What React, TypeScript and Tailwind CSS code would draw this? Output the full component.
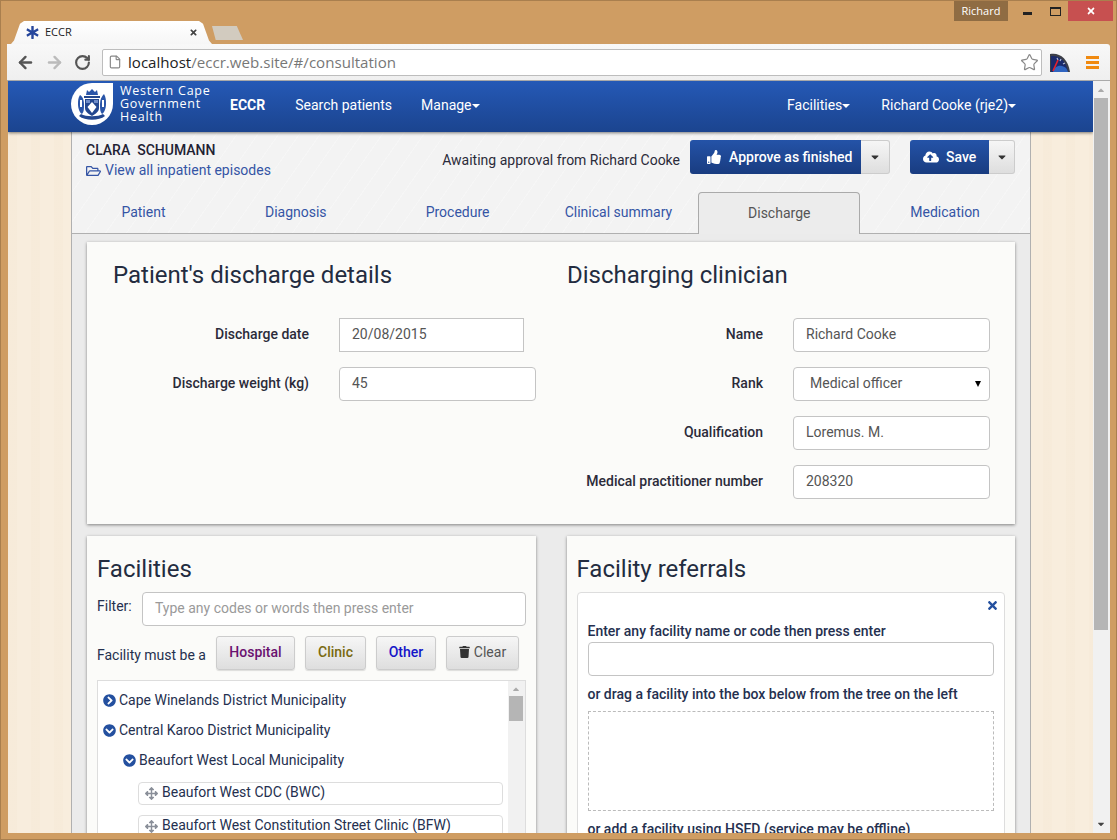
import { ArrowLeft, ArrowRight, File, RotateCw, Star } from "lucide-react"
import {
  FaArrowsAlt,
  FaCaretDown,
  FaCaretUp,
  FaChevronCircleDown,
  FaChevronCircleRight,
  FaCloudUploadAlt,
  FaRegFolderOpen,
  FaStarOfLife,
  FaThumbsUp,
  FaTimes,
  FaTrash,
} from "react-icons/fa"

const tabs = [
  { label: "Patient", w: "w-[143px]" },
  { label: "Diagnosis", w: "w-[162px]" },
  { label: "Procedure", w: "w-[162px]" },
  { label: "Clinical summary", w: "w-[160px]" },
  { label: "Discharge", w: "w-[162px]", active: true },
  { label: "Medication", w: "w-[170px]" },
]

function Caret() {
  return <span className="inline-block h-0 w-0 border-x-[4px] border-t-[4px] border-x-transparent border-t-white align-middle" />
}

function Crest() {
  return (
    <svg width="42" height="42" viewBox="0 0 42 42" className="mb-[4px] shrink-0">
      <path d="M21 0H42V21A21 21 0 1 1 21 0Z" fill="#fff" />
      {/* crown and helm */}
      <path d="M16 7l2 2 3-3 3 3 2-2 1 5H15Z" fill="#2a55a8" />
      <path d="M13 13h16v2H13Z" fill="#23478f" />
      {/* shield */}
      <path d="M14 16h14v9c0 4-4 6-7 8-3-2-7-4-7-8Z" fill="#23478f" />
      <path d="M21 19l4.500 5-4.500 6-4.500-6Z" fill="#fff" />
      <path d="M15 17h4v3h-4ZM23 17h4v3h-4Z" fill="#6f8cc8" />
      {/* supporters */}
      <path d="M9 12c2 1 4 4 4 9s0 8-2 10c-2-1-4-5-4-10 0-3 0-6 2-9ZM33 11c-2 2-4 5-4 10s0 8 2 10c2-1 4-5 4-10 0-3 0-7-2-10Z" fill="#2a55a8" />
      <path d="M9 17h2v7H9ZM31 17h2v7h-2Z" fill="#fff" />
      {/* motto ribbon */}
      <path d="M8 33c6 5 20 5 26 0l-2-2c-5 3-17 3-22 0Z" fill="#23478f" />
    </svg>
  )
}

function Gauge() {
  return (
    <svg className="ml-[8px] shrink-0" width="20" height="20" viewBox="0 0 20 20">
      <path d="M0 20V2C9 0 18 6 20 20Z" fill="#3c3f48" />
      <path d="M1 20V4C9 3 16 8 18 20Z" fill="#1a2a6c" />
      <path d="M3 20C4 15 8 13 12 14s5 3 6 6Z" fill="#2f64c0" />
      <path d="M7 6l1 2M11 7l-1 2M15 11l-2 1" stroke="#b8c0d8" strokeWidth="1.2" />
      <path d="M3 19 8 8" stroke="#e8202c" strokeWidth="1.6" />
    </svg>
  )
}

function Field({ label, children }: { label: string; children: React.ReactNode }) {
  return (
    <div className="mb-[15px] flex items-center">
      <label className="w-[252px] shrink-0 pr-[30px] pb-[2px] text-right font-medium text-[#2b2b3a]">{label}</label>
      {children}
    </div>
  )
}

function TextBox({ value, className }: { value: string; className: string }) {
  return (
    <div className={`flex h-[34px] items-center border border-[#c4c4c4] bg-white px-3 pb-[2px] text-[#555] ${className}`}>
      {value}
    </div>
  )
}

function FilterButton({ label, w, color, children }: { label: string; w: string; color: string; children?: React.ReactNode }) {
  return (
    <div className={`flex h-[34px] ${w} items-center justify-center gap-1 rounded-[3px] border border-[#ccc] bg-gradient-to-b from-[#f6f6f6] to-[#dedede] pb-[2px] font-medium shadow-[0_1px_1px_rgba(0,0,0,0.12)] ${color}`}>
      {children}
      {label}
    </div>
  )
}

function TreeNode({ label, open, indent }: { label: string; open?: boolean; indent: string }) {
  return (
    <div className={`flex h-[30px] items-center gap-[3px] pb-[2px] ${indent} text-[#25304f]`}>
      {open ? <FaChevronCircleDown className="h-[13px] w-[13px] text-[#24509f]" /> : <FaChevronCircleRight className="h-[13px] w-[13px] text-[#24509f]" />}
      {label}
    </div>
  )
}

function DragItem({ label }: { label: string }) {
  return (
    <div className="mb-[10px] ml-[35px] flex h-[23px] w-[365px] shrink-0 items-center gap-[4px] rounded-[4px] border border-[#ddd] bg-white pb-[2px] pl-[6px] text-[#25304f]">
      <FaArrowsAlt className="mt-[2px] h-[13px] w-[13px] text-[#8a8f99]" />
      {label}
    </div>
  )
}

export default function App() {
  return (
    <div className="flex h-[840px] w-[1117px] flex-col overflow-hidden border border-[#a97f4e] bg-[#cf9d63] font-['Roboto',sans-serif] text-[14px] text-[#25304f]">
      {/* window title bar */}
      <div className="flex h-[43px] shrink-0 items-start justify-between">
        <div className="mt-[20px] ml-[10px] flex items-start">
          <div className="flex h-[23px] w-[201px] items-center bg-gradient-to-b from-white to-[#f6f6f6] pr-[14px] pl-[15px] font-['Open_Sans',sans-serif] text-[11px] text-[#222] [clip-path:polygon(0_100%,3px_85%,9px_12%,13px_0,calc(100%-13px)_0,calc(100%-9px)_12%,calc(100%-3px)_85%,100%_100%)]">
            <FaStarOfLife className="h-[13px] w-[13px] text-[#27479c]" />
            <span className="ml-[6px] flex-1">ECCR</span>
            <FaTimes className="h-[9px] w-[9px] text-[#444]" />
          </div>
          <div className="mt-[5px] h-[14px] w-[31px] bg-[#d2cbbf] [clip-path:polygon(0_0,80%_0,100%_100%,12%_100%)]" />
        </div>
        <div className="mr-[3px] flex items-start">
          <div className="flex h-[20px] w-[54px] items-center justify-center bg-[#8f6c43] font-['Open_Sans',sans-serif] text-[11px] text-white">Richard</div>
          <div className="flex h-[20px] w-[38px] items-center justify-center">
            <span className="mt-[5px] h-[3px] w-[9px] bg-[#222]" />
          </div>
          <div className="flex h-[20px] w-[18px] items-center justify-center">
            <span className="h-[9px] w-[11px] border border-t-2 border-[#222]" />
          </div>
          <div className="ml-[4px] flex h-[20px] w-[45px] items-center justify-center bg-[#c75050]">
            <FaTimes className="h-[10px] w-[10px] text-white" />
          </div>
        </div>
      </div>

      {/* chrome toolbar */}
      <div className="mx-[6px] flex h-[37px] shrink-0 items-center rounded-tr-[3px] border-b border-[#a9a9a9] bg-gradient-to-b from-[#f8f8f8] to-[#efefef] pl-[9px]">
        <ArrowLeft className="h-[19px] w-[19px] text-[#555]" strokeWidth={3} />
        <ArrowRight className="ml-[10px] h-[19px] w-[19px] text-[#bbb]" strokeWidth={3} />
        <RotateCw className="ml-[10px] h-[17px] w-[17px] text-[#555]" strokeWidth={3} />
        <div className="ml-[11px] flex h-[27px] w-[940px] shrink-0 items-center rounded-[2px] border border-[#bdbdbd] bg-white pl-[5px]">
          <File className="h-[14px] w-[14px] text-[#888]" />
          <span className="ml-[6px] font-['Open_Sans',sans-serif] text-[15.1px] text-[#777]">
            <span className="text-[#222]">localhost</span>/eccr.web.site/#/consultation
          </span>
          <Star className="mr-[2px] ml-auto h-[19px] w-[19px] text-[#888]" strokeWidth={1.5} />
        </div>
        <Gauge />
        <div className="ml-[16px] flex h-[13px] w-[13px] flex-col justify-between">
          <span className="h-[3px] bg-[#f08a10]" />
          <span className="h-[3px] bg-[#f08a10]" />
          <span className="h-[3px] bg-[#f08a10]" />
        </div>
      </div>

      {/* browser viewport */}
      <div className="mr-[6px] ml-[7px] flex h-[752px] shrink-0 overflow-hidden">
        <div className="flex w-[1085px] shrink-0 flex-col overflow-hidden bg-[#f8eddd] bg-[repeating-linear-gradient(90deg,rgba(214,180,130,0.035)_0,rgba(214,180,130,0.035)_9px,transparent_9px,transparent_23px)]">
          <nav className="z-10 flex h-[51px] shrink-0 items-center bg-gradient-to-b from-[#2559b6] to-[#1b448f] pr-[77px] pb-[2px] pl-[63px] text-white shadow-[0_1px_3px_rgba(0,0,0,0.5)]">
            <Crest />
            <div className="mb-[4px] ml-[7px] w-[110px] shrink-0 font-['Open_Sans',sans-serif] text-[12.5px] leading-[13px] tracking-[0.75px]">
              <div className="font-medium">Western Cape</div>
              <div className="font-medium">Government</div>
              <div>Health</div>
            </div>
            <span className="font-bold">ECCR</span>
            <span className="ml-[30px]">Search patients</span>
            <span className="ml-[29px]">Manage<Caret /></span>
            <span className="ml-auto">Facilities<Caret /></span>
            <span className="ml-[31px]">Richard Cooke (rje2)<Caret /></span>
          </nav>

          <div className="ml-[63px] flex w-[960px] flex-1 flex-col overflow-hidden border-x border-[#b0b0b0] bg-[#f3f3f3] bg-[repeating-linear-gradient(125deg,rgba(255,255,255,0.25)_0,rgba(255,255,255,0.25)_1px,transparent_1px,transparent_17px)]">
            {/* patient header */}
            <div className="flex h-[60px] shrink-0 pr-[15px] pl-[14px]">
              <div className="pt-[8px]">
                <div className="font-medium whitespace-pre text-[#1f2233]">CLARA  SCHUMANN</div>
                <div className="-mt-px flex items-center gap-[4px] text-[#3555a5]">
                  <FaRegFolderOpen className="h-[14px] w-[15px]" />
                  View all inpatient episodes
                </div>
              </div>
              <div className="mt-[8px] ml-auto flex items-start">
                <span className="mt-[10px] mr-[10px] text-[#2b2b3a]">Awaiting approval from Richard Cooke</span>
                <div className="flex h-[34px] w-[171px] items-center gap-[8px] rounded-l-[3px] bg-gradient-to-b from-[#2453a8] to-[#193c80] pl-[17px] font-medium text-white">
                  <FaThumbsUp className="h-[14px] w-[14px]" />
                  Approve as finished
                </div>
                <div className="flex h-[34px] w-[29px] items-center justify-center rounded-r-[3px] border border-l-0 border-[#ccc] bg-gradient-to-b from-[#f6f6f6] to-[#dedede]">
                  <FaCaretDown className="h-[12px] w-[12px] text-[#333]" />
                </div>
                <div className="ml-[20px] flex h-[34px] w-[79px] items-center gap-[7px] rounded-l-[3px] bg-gradient-to-b from-[#2453a8] to-[#193c80] pl-[13px] font-medium text-white">
                  <FaCloudUploadAlt className="h-[16px] w-[16px]" />
                  Save
                </div>
                <div className="flex h-[34px] w-[26px] items-center justify-center rounded-r-[3px] border border-l-0 border-[#ccc] bg-gradient-to-b from-[#f6f6f6] to-[#dedede]">
                  <FaCaretDown className="h-[12px] w-[12px] text-[#333]" />
                </div>
              </div>
            </div>

            {/* tabs */}
            <div className="flex h-[42px] shrink-0 border-b border-[#b0b0b0]">
              {tabs.map((t) =>
                t.active ? (
                  <div key={t.label} className={`${t.w} z-10 -mb-px flex items-center justify-center rounded-t-[4px] border border-b-0 border-[#aaa] bg-[#ececec] text-[#555]`}>
                    {t.label}
                  </div>
                ) : (
                  <div key={t.label} className={`${t.w} flex items-center justify-center text-[#3555a5]`}>
                    {t.label}
                  </div>
                ),
              )}
            </div>

            <div className="flex flex-1 flex-col bg-[#ebebeb]">
              {/* discharge details */}
              <div className="mx-[15px] mt-[8px] grid h-[282px] shrink-0 grid-cols-[454px_1fr] bg-[#fbfbf9] shadow-[0_1px_3px_rgba(0,0,0,0.45)]">
                <div className="pl-[26px]">
                  <h2 className="mt-[18px] h-[30px] text-[24px] leading-[30px] text-[#232c40]">Patient's discharge details</h2>
                  <div className="mt-[28px] -ml-[26px]">
                    <Field label="Discharge date">
                      <TextBox value="20/08/2015" className="w-[185px]" />
                    </Field>
                    <Field label="Discharge weight (kg)">
                      <TextBox value="45" className="w-[197px] rounded-[4px]" />
                    </Field>
                  </div>
                </div>
                <div className="pl-[26px]">
                  <h2 className="mt-[18px] h-[30px] text-[24px] leading-[30px] text-[#232c40]">Discharging clinician</h2>
                  <div className="mt-[28px] -ml-[26px]">
                    <Field label="Name">
                      <TextBox value="Richard Cooke" className="w-[197px] rounded-[4px]" />
                    </Field>
                    <Field label="Rank">
                      <div className="flex h-[34px] w-[197px] items-center justify-between rounded-[4px] border border-[#c4c4c4] bg-white pr-[8px] pb-[2px] pl-4 text-[#555]">
                        Medical officer
                        <span className="mt-[2px] h-0 w-0 border-x-[3.5px] border-t-[6px] border-x-transparent border-t-black" />
                      </div>
                    </Field>
                    <Field label="Qualification">
                      <TextBox value="Loremus. M." className="w-[197px] rounded-[4px]" />
                    </Field>
                    <Field label="Medical practitioner number">
                      <TextBox value="208320" className="w-[197px] rounded-[4px]" />
                    </Field>
                  </div>
                </div>
              </div>

              {/* bottom panels */}
              <div className="mx-[15px] mt-[12px] flex flex-1 gap-[31px]">
                <div className="w-[449px] bg-[#fbfbf9] px-[10px] shadow-[0_1px_3px_rgba(0,0,0,0.45)]">
                  <h2 className="mt-[18px] h-[30px] text-[24px] leading-[30px] text-[#232c40]">Facilities</h2>
                  <div className="mt-[8px] flex">
                    <span className="mt-[4px] w-[45px]">Filter:</span>
                    <div className="flex h-[34px] flex-1 items-center rounded-[4px] border border-[#c4c4c4] bg-white pb-[2px] pl-3 text-[#9a9a9a]">
                      Type any codes or words then press enter
                    </div>
                  </div>
                  <div className="mt-[10px] flex items-center">
                    <span className="mt-[5px] w-[119px]">Facility must be a</span>
                    <div className="flex gap-[10px]">
                      <FilterButton label="Hospital" w="w-[79px]" color="text-[#6a1270]" />
                      <FilterButton label="Clinic" w="w-[61px]" color="text-[#7a6a10]" />
                      <FilterButton label="Other" w="w-[60px]" color="text-[#1515c8]" />
                      <FilterButton label="Clear" w="w-[73px]" color="font-normal text-[#555]">
                        <FaTrash className="h-[12px] w-[11px] text-[#333]" />
                      </FilterButton>
                    </div>
                  </div>
                  <div className="mt-[10px] flex h-[160px] border border-b-0 border-[#ddd] bg-white">
                    <div className="flex-1 pt-[5px] pl-[5px]">
                      <TreeNode label="Cape Winelands District Municipality" indent="" />
                      <TreeNode label="Central Karoo District Municipality" open indent="" />
                      <TreeNode label="Beaufort West Local Municipality" open indent="pl-[20px]" />
                      <div className="mt-[6px] flex flex-col">
                        <DragItem label="Beaufort West CDC (BWC)" />
                        <DragItem label="Beaufort West Constitution Street Clinic (BFW)" />
                      </div>
                    </div>
                    <div className="flex w-[17px] flex-col items-center bg-[#f1f1f1]">
                      <FaCaretUp className="mt-[3px] h-[10px] w-[10px] text-[#aaa]" />
                      <div className="mt-[2px] h-[25px] w-[14px] bg-[#b5b5b5]" />
                    </div>
                  </div>
                </div>
                <div className="w-[449px] bg-[#fbfbf9] px-[10px] shadow-[0_1px_3px_rgba(0,0,0,0.45)]">
                  <h2 className="mt-[18px] h-[30px] text-[24px] leading-[30px] text-[#232c40]">Facility referrals</h2>
                  <div className="mt-[8px] h-[260px] rounded-t-[4px] border border-[#ddd] bg-white px-[10px]">
                    <div className="-mr-[5px] flex h-[24px] items-center justify-end">
                      <FaTimes className="h-[13px] w-[13px] text-[#24509f]" />
                    </div>
                    <div className="mt-[4px] font-medium">Enter any facility name or code then press enter</div>
                    <div className="h-[34px] w-[406px] rounded-[4px] border border-[#c4c4c4] bg-white" />
                    <div className="mt-[8px] font-medium">or drag a facility into the box below from the tree on the left</div>
                    <div className="mt-[6px] h-[100px] w-[406px] border border-dashed border-[#bbb]" />
                    <div className="mt-[8px] font-medium">or add a facility using HSED (service may be offline)</div>
                  </div>
                </div>
              </div>
            </div>
          </div>
        </div>

        {/* page scrollbar */}
        <div className="flex flex-1 flex-col items-center justify-between bg-[#f1f1f1] pr-[2px] pl-px">
          <div className="flex w-full flex-col items-center">
            <FaCaretUp className="mt-[4px] h-[10px] w-[10px] text-[#aaa]" />
            <div className="mt-[3px] h-[532px] w-full bg-[#b5b5b5]" />
          </div>
          <FaCaretDown className="mb-[4px] h-[10px] w-[10px] text-[#444]" />
        </div>
      </div>
    </div>
  )
}
